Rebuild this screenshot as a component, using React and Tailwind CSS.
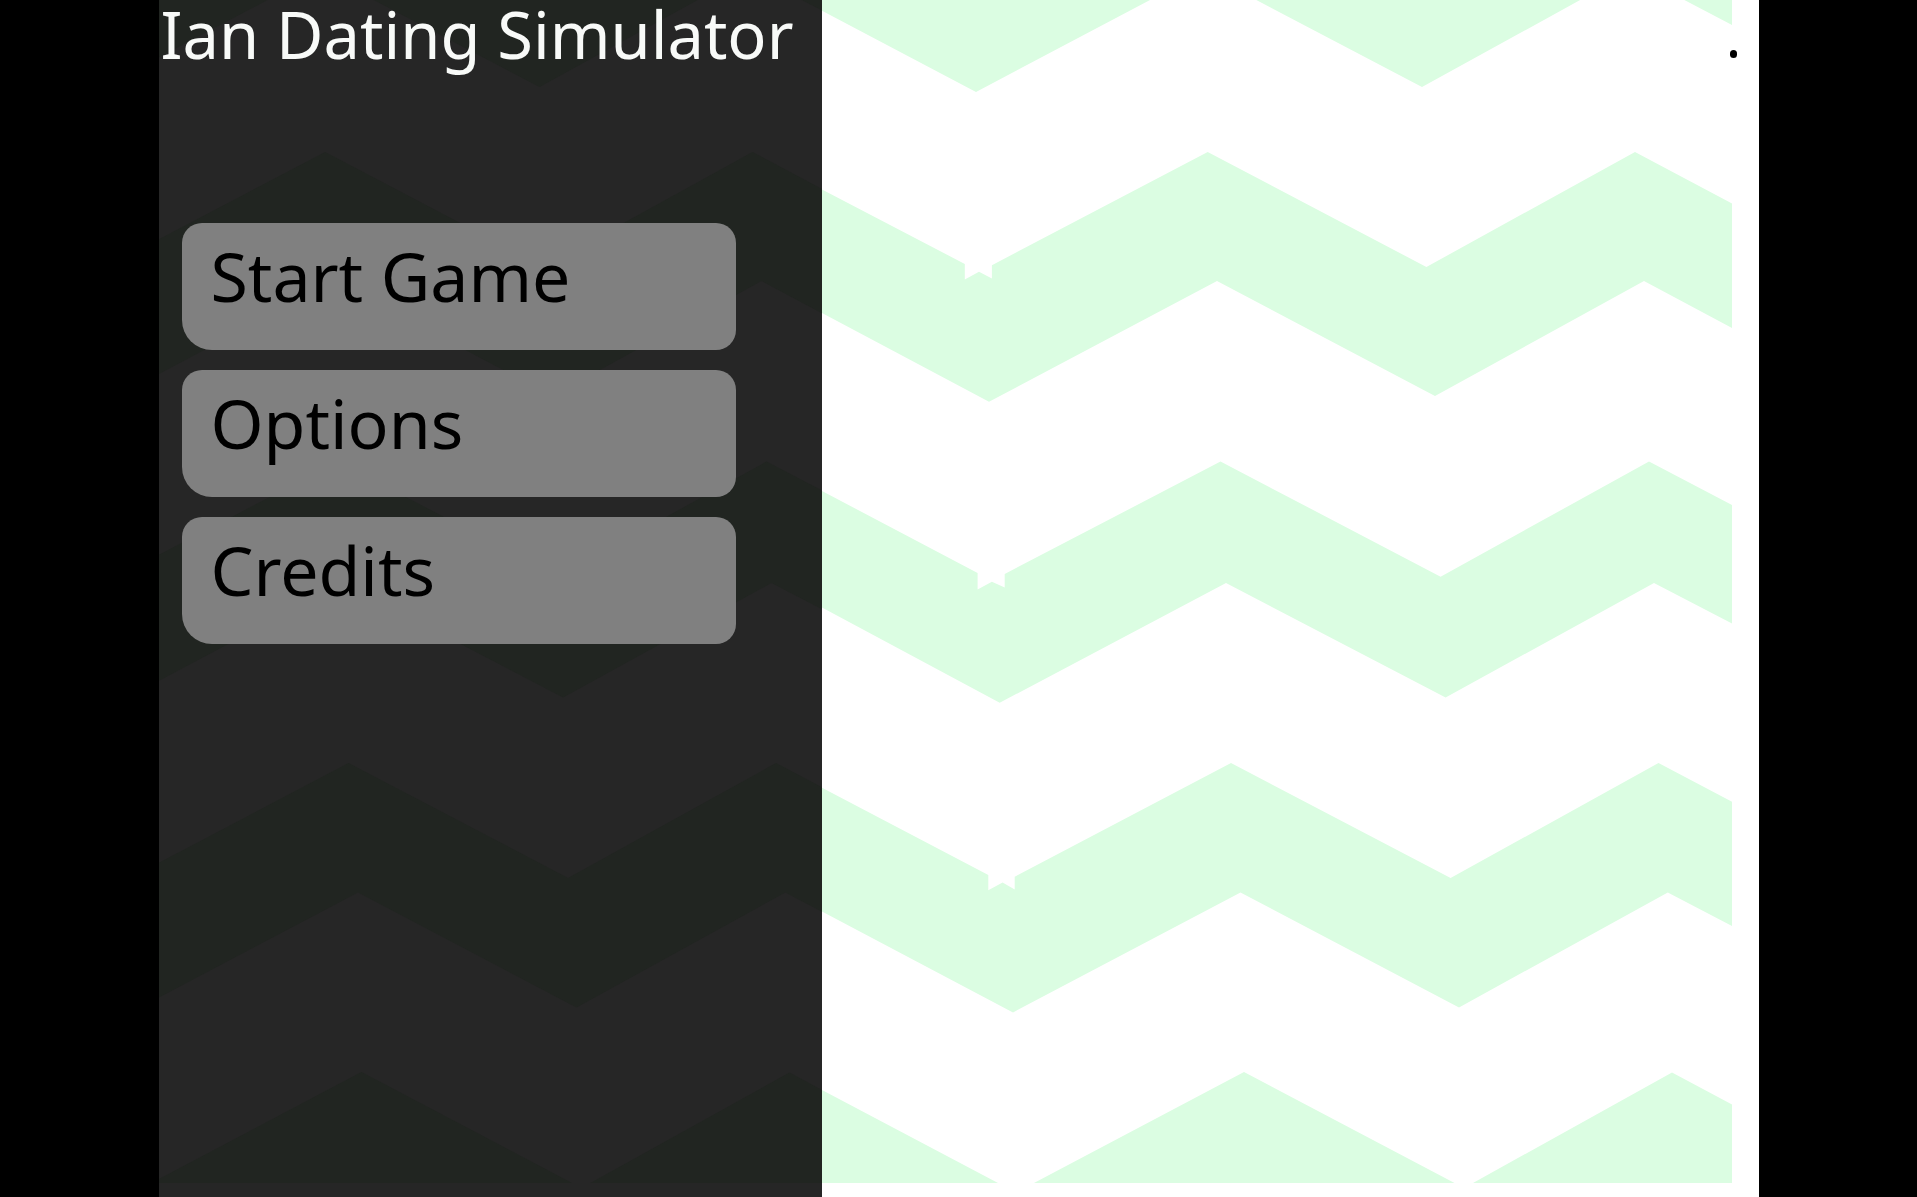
import React from "react";

// chevron bands, in page pixels; the dark panel reuses them shifted left
const BANDS = [
  "821,-300 1731,-300 1731,25 1630,-28 1421,87 1202,-28 975,92 821,10.7",
  "821,189.4 963.8,264 963.8,279.4 978,271.7 990.9,278.6 990.9,265.2 1206.7,152 1425.4,267 1634,152 1731,203.6 1731,328 1643,281 1434,396 1216,281 988,401.8 821,313",
  "821,491 976.6,573 976.6,589.4 990.9,581.7 1003.7,587.4 1003.7,574 1219.5,461.5 1439.6,576.7 1648,461.5 1731,505 1731,623.6 1653,583 1444.6,697.5 1225,583 998.7,702.8 821,607.6",
  "821,787.7 987.3,875 987.3,890.2 1001.6,882.6 1013.7,889.4 1013.7,876.8 1230,763 1449.6,878 1657.5,763 1731,801.8 1731,926 1666.8,892.5 1458,1007.5 1239.5,892.5 1012,1012.4 821,911.5",
  "821,1090 1015,1192.5 1243,1072 1463,1188 1671,1072.6 1731,1104.6 1731,1300 821,1300",
];

function Chevrons({ viewBox, width, fill }) {
  return (
    <svg
      className="absolute top-0 left-0 pointer-events-none"
      width={width}
      height={1183}
      viewBox={viewBox}
      preserveAspectRatio="none"
    >
      {BANDS.map((pts, i) => (
        <polygon key={i} points={pts} fill={fill} />
      ))}
    </svg>
  );
}

const menuItems = ["Start Game", "Options", "Credits"];

function MenuButton({ label }) {
  return (
    <button className="w-[554px] h-[127px] bg-[#808080] rounded-[20px] rounded-bl-[30px] pl-[29px] pt-[19px] text-left text-black text-[68px] leading-none flex items-start">
      {label}
    </button>
  );
}

export default function App() {
  return (
    <div
      className="w-full h-[1197px] bg-black flex justify-center overflow-hidden"
      style={{ fontFamily: '"Noto Sans", "Open Sans", sans-serif' }}
    >
      <div className="relative w-[663px] h-full bg-[#262626]">
        <Chevrons viewBox="1040.5 0 663 1183" width={663} fill="#212521" />
        <div className="relative flex flex-col">
          <h1 className="mt-[2px] pl-[2px] text-[65px] leading-none text-[#f8faf8] font-normal whitespace-nowrap">
            Ian Dating Simulator
          </h1>
          <div className="mt-[156px] pl-[23px] flex flex-col gap-[20px]">
            {menuItems.map((item) => (
              <MenuButton key={item} label={item} />
            ))}
          </div>
        </div>
      </div>
      <div className="relative w-[937px] h-full bg-white">
        <Chevrons viewBox="821 0 910 1183" width={910} fill="#dbfde2" />
        <div className="absolute left-[908px] top-[50px] w-[7px] h-[8px] rounded-full bg-black" />
      </div>
    </div>
  );
}
